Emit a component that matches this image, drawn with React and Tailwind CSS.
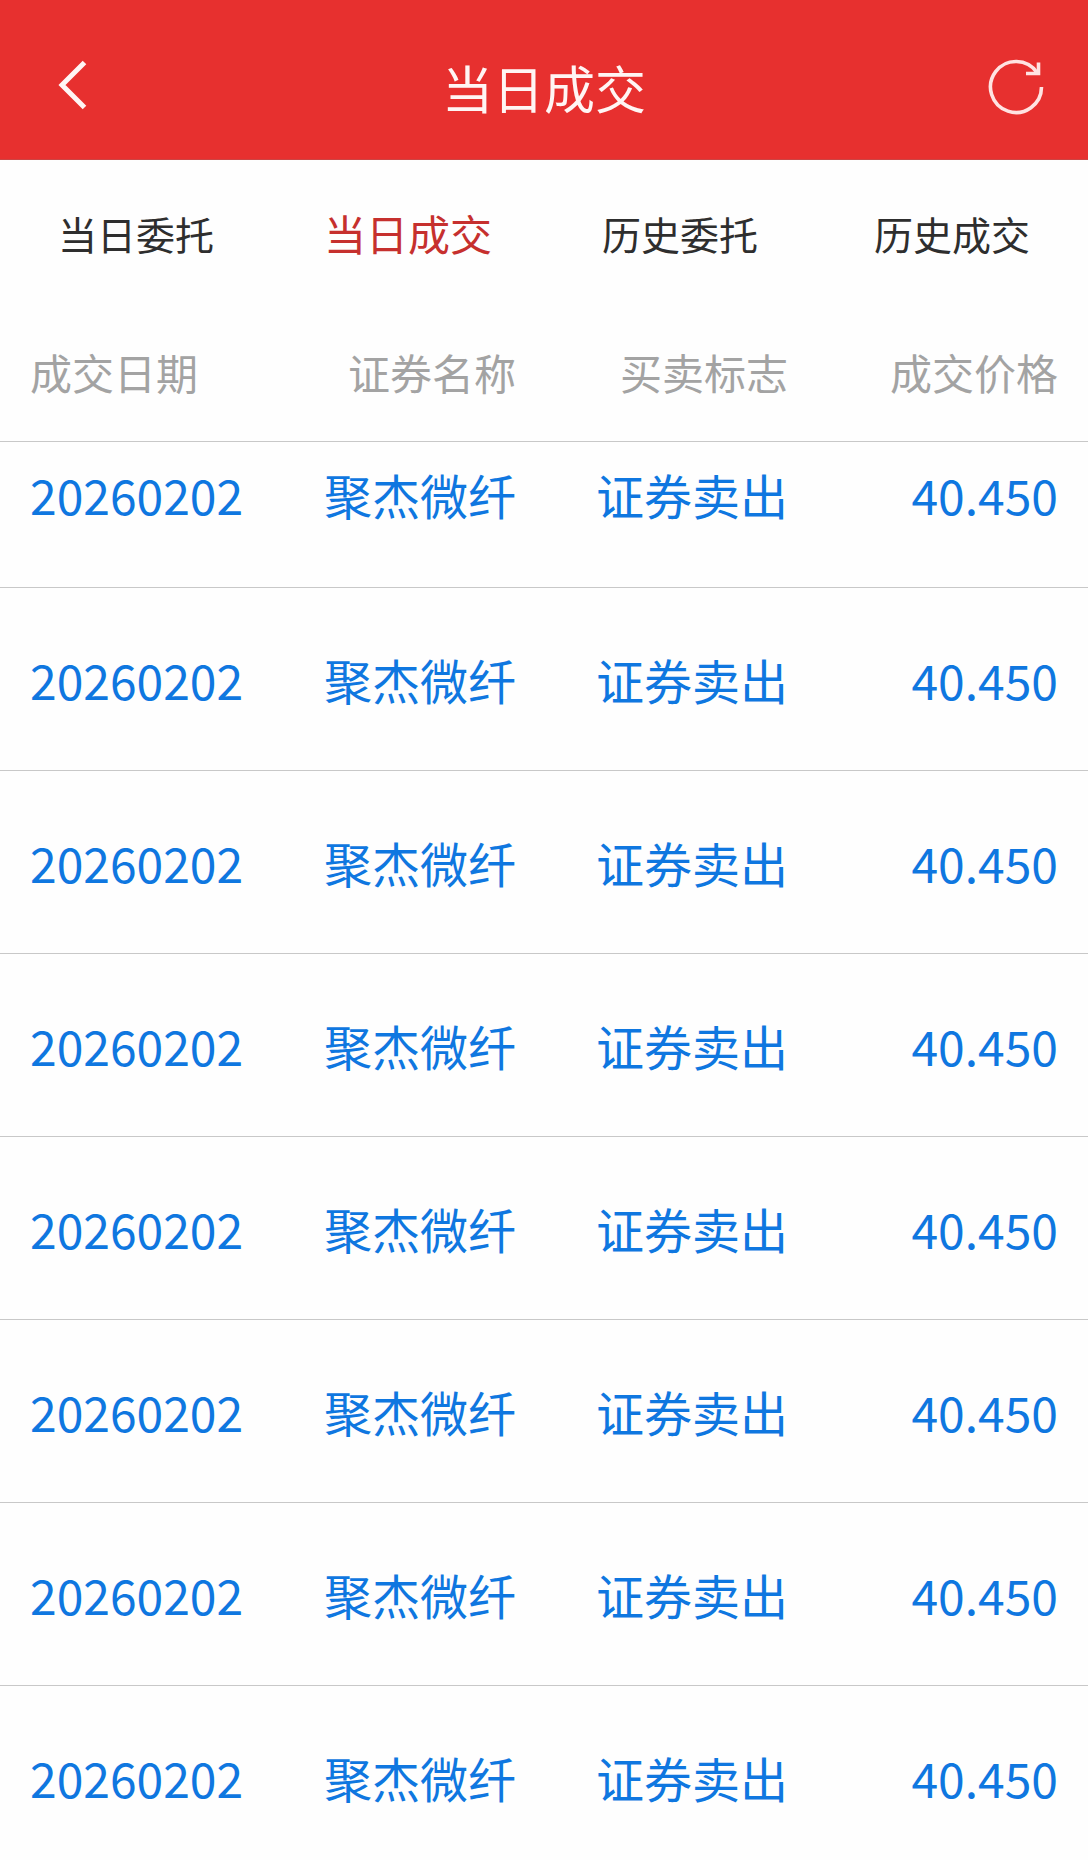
const tabs = [
  { label: '当日委托', active: false },
  { label: '当日成交', active: true },
  { label: '历史委托', active: false },
  { label: '历史成交', active: false },
];

const columns = ['成交日期', '证券名称', '买卖标志', '成交价格'];

const trades = Array.from({ length: 8 }, (_, id) => ({
  id,
  date: '20260202',
  name: '聚杰微纤',
  side: '证券卖出',
  price: '40.450',
}));

function BackIcon() {
  return (
    <svg className="h-[56px] w-[40px]" viewBox="0 0 40 56" fill="none" aria-hidden="true">
      <path d="M34.5 3.5 L12 26 L34.5 48.5" stroke="#fff5f4" strokeWidth="5" />
    </svg>
  );
}

function RefreshIcon() {
  return (
    <svg className="size-[60px]" viewBox="0 0 60 60" fill="none" aria-hidden="true">
      <path d="M55.5 30 A25.5 25.5 0 1 1 51 15.5" stroke="#ffe3e2" strokeWidth="3.6" />
      <path d="M52.5 5.5 V16.5 H40" stroke="#ffe3e2" strokeWidth="3.6" />
    </svg>
  );
}

export default function App() {
  return (
    <div className="min-h-screen w-full overflow-hidden bg-[#fefefe] font-['Noto_Sans_CJK_SC',sans-serif]">
      <header className="grid h-[160px] grid-cols-[1fr_auto_1fr] items-center border-b border-[#cc4544] bg-[#e7302f] px-[42px] pt-[14px]">
        <button type="button" aria-label="返回" className="justify-self-start pl-[8px]">
          <BackIcon />
        </button>
        <h1 className="text-[51px] leading-[64px] text-[#fff5f4]">当日成交</h1>
        <button type="button" aria-label="刷新" className="justify-self-end">
          <RefreshIcon />
        </button>
      </header>

      <nav className="grid h-[145px] grid-cols-4 items-center">
        {tabs.map((tab) => (
          <a
            key={tab.label}
            href="#"
            aria-current={tab.active ? 'page' : undefined}
            className={
              tab.active
                ? 'text-center text-[42px] leading-[60px] text-[#c6302e]'
                : 'text-center text-[39px] leading-[60px] text-[#2e2e2e]'
            }
          >
            {tab.label}
          </a>
        ))}
      </nav>

      <table className="w-full table-fixed border-collapse">
        <thead>
          <tr className="h-[136px] border-b border-[#c8c8c8] text-[42px] leading-[60px] text-[#a3a3a3]">
            {columns.map((column) => (
              <th
                key={column}
                scope="col"
                className="whitespace-nowrap pb-[2px] pr-[28px] text-right font-normal first:pl-[30px] first:pr-0 first:text-left last:pr-[30px]"
              >
                {column}
              </th>
            ))}
          </tr>
        </thead>
        <tbody className="text-[48px] leading-[60px] text-[#0f77e0]">
          {trades.map((trade) => (
            <tr
              key={trade.id}
              className="h-[183px] border-b border-[#c8c8c8] align-middle first:h-[146px] first:align-top [&>td]:whitespace-nowrap first:[&>td]:pt-[22px]"
            >
              <td className="pl-[30px] text-left">{trade.date}</td>
              <td className="pr-[28px] text-right">{trade.name}</td>
              <td className="pr-[28px] text-right">{trade.side}</td>
              <td className="pr-[30px] text-right">{trade.price}</td>
            </tr>
          ))}
        </tbody>
      </table>
    </div>
  );
}
